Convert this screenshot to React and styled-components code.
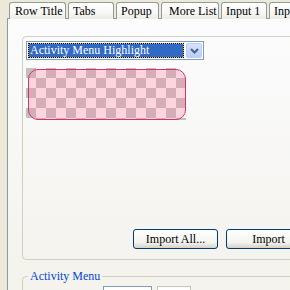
import React from "react";
import styled, { createGlobalStyle } from "styled-components";

const GlobalStyle = createGlobalStyle`
    html, body {
        margin: 0;
        padding: 0;
        overflow: hidden;
        background: #ECE9D8;
        font-family: "Liberation Serif", "Times New Roman", serif;
        font-size: 12px;
    }
`

const Window = styled.div`
    width: 420px;
    height: 290px;
    padding: 2px 0 0 7px;
    box-sizing: border-box;
    display: flex;
    flex-direction: column;
`

const TabStrip = styled.div`
    display: flex;
    gap: 2px;
    padding-left: 2px;
    height: 17px;
    margin-bottom: -1px;
    position: relative;
    z-index: 1;
`

const Tab = styled.div`
    width: ${(p) => p.$w}px;
    flex-shrink: 0;
    height: 17px;
    box-sizing: border-box;
    border: 1px solid #919B9C;
    border-bottom: none;
    border-radius: 3px 3px 0 0;
    padding-left: ${(p) => p.$pad || 4}px;
    background: linear-gradient(#FFFFFF, #F7F7F4 60%, #ECEBE6);
    color: #000;
    line-height: 16px;
    white-space: nowrap;
    overflow: hidden;
`

const Panel = styled.div`
    flex: 1;
    border-left: 1px solid #919B9C;
    border-top: 1px solid #919B9C;
    background: linear-gradient(#FCFCFE, #F4F3EE 240px);
    padding: 17px 0 0 14px;
    display: flex;
    flex-direction: column;
`

const GroupBox = styled.div`
    width: 340px;
    height: 224px;
    box-sizing: border-box;
    border: 1px solid #D0D0BF;
    border-radius: 4px;
    padding: 4px 0 10px 3px;
    display: flex;
    flex-direction: column;
    align-items: flex-start;
`

const Combo = styled.div`
    width: 178px;
    height: 19px;
    box-sizing: border-box;
    border: 1px solid #7F9DB9;
    background: #fff;
    padding: 1px;
    display: flex;
    gap: 2px;
`

const Selected = styled.div`
    flex: 1;
    box-sizing: border-box;
    background: #316AC5;
    border: 1px solid #D9C46A;
    outline: 1px dotted #000;
    outline-offset: -1px;
    color: #fff;
    padding-left: 1px;
    line-height: 13px;
    white-space: nowrap;
    overflow: hidden;
`

const ComboButton = styled.div`
    width: 16px;
    box-sizing: border-box;
    border: 1px solid #B9CDF6;
    border-radius: 2px;
    background: linear-gradient(#D6E3FD, #B8CDF9);
    display: flex;
    align-items: center;
    justify-content: center;
`

const Checker = styled.div`
    margin-top: 8px;
    width: 160px;
    height: 52px;
    box-sizing: border-box;
    padding: 1px 0 0 2px;
    display: flex;
    background: repeating-conic-gradient(#FFFFFF 0 25%, #C0C0C0 0 50%) 0 0 / 20px 20px;
`

const Highlight = styled.div`
    flex: 1;
    border: 1px solid #D6336C;
    border-radius: 10px;
    background: rgba(247, 140, 167, 0.37);
`

const ButtonRow = styled.div`
    margin-top: auto;
    padding-left: 107px;
    display: flex;
    gap: 8px;
`

const PushButton = styled.button`
    width: 85px;
    height: 20px;
    flex-shrink: 0;
    border: 1px solid #003C74;
    border-radius: 3px;
    background: linear-gradient(#FFFFFF, #F3F3EF 70%, #D6D0C5);
    font-family: inherit;
    font-size: 12px;
    color: #000;
    padding: 0;
    line-height: 17px;
`

const FieldSet = styled.fieldset`
    margin: 9px 0 0 0;
    width: 340px;
    box-sizing: border-box;
    border: 1px solid #D0D0BF;
    border-radius: 4px;
    padding: 3px 0 0 5px;
    min-width: 0;
`

const Legend = styled.legend`
    color: #0046D5;
    padding: 0 2px;
    line-height: 14px;
`

const FieldRow = styled.div`
    display: flex;
    gap: 5px;
    padding-left: 75px;
`

const TextBox = styled.div`
    width: ${(p) => p.$w}px;
    height: 20px;
    box-sizing: border-box;
    background: #fff;
    border: 1px solid ${(p) => (p.$dark ? "#C8C6BC" : "#7F9DB9")};
`

const tabs = [
    { label: "Row Title", w: 57, pad: 5 },
    { label: "Tabs", w: 46 },
    { label: "Popup", w: 43 },
    { label: "More List", w: 58, pad: 7 },
    { label: "Input 1", w: 46 },
    { label: "Input 2", w: 46 },
];

const App = () => {
    return (
        <>
            <GlobalStyle />
            <Window>
                <TabStrip>
                    {tabs.map((t) => (
                        <Tab key={t.label} $w={t.w} $pad={t.pad}>{t.label}</Tab>
                    ))}
                </TabStrip>
                <Panel>
                    <GroupBox>
                        <Combo>
                            <Selected>Activity Menu Highlight</Selected>
                            <ComboButton>
                                <svg width="9" height="6" viewBox="0 0 9 6">
                                    <path d="M1 1 L4.5 4.5 L8 1" fill="none" stroke="#4D6185" strokeWidth="2" />
                                </svg>
                            </ComboButton>
                        </Combo>
                        <Checker>
                            <Highlight />
                        </Checker>
                        <ButtonRow>
                            <PushButton>Import All...</PushButton>
                            <PushButton>Import</PushButton>
                        </ButtonRow>
                    </GroupBox>
                    <FieldSet>
                        <Legend>Activity Menu</Legend>
                        <FieldRow>
                            <TextBox $w={49} />
                            <TextBox $w={34} $dark />
                        </FieldRow>
                    </FieldSet>
                </Panel>
            </Window>
        </>
    );
}

export default App;
